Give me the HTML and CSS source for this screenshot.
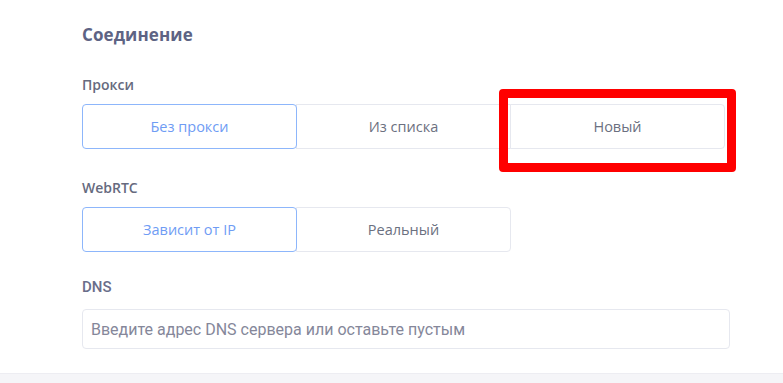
FILE: index.html
```html
<!DOCTYPE html>
<html lang="ru">
<head>
<meta charset="utf-8">
<link rel="stylesheet" href="styles.css">
</head>
<body>
<div class="page">
  <section class="section">
    <h2 class="title">Соединение</h2>
    <div class="field field-proxy">
      <div class="label">Прокси</div>
      <div class="seg seg-3">
        <button class="seg-btn active">Без прокси</button>
        <button class="seg-btn">Из списка</button>
        <button class="seg-btn marked">Новый</button>
      </div>
    </div>
    <div class="field field-webrtc">
      <div class="label">WebRTC</div>
      <div class="seg seg-2">
        <button class="seg-btn active">Зависит от IP</button>
        <button class="seg-btn">Реальный</button>
      </div>
    </div>
    <div class="field field-dns">
      <div class="label label-dns">DNS</div>
      <input class="input" type="text" placeholder="Введите адрес DNS сервера или оставьте пустым">
    </div>
  </section>
  <div class="footer-band"></div>
</div>
</body>
</html>
```

FILE: styles.css
```css
html, body {
  margin: 0;
  padding: 0;
  background: #ffffff;
}
body {
  font-family: "Open Sans", "Noto Sans", sans-serif;
  width: 783px;
  height: 383px;
  overflow: hidden;
}
.page {
  display: flex;
  flex-direction: column;
  height: 383px;
}
.section {
  padding: 24px 0 0 82px;
  box-sizing: border-box;
}
.title {
  margin: 0;
  font-size: 17px;
  line-height: 22px;
  font-weight: 700;
  color: #5d6384;
  letter-spacing: 0.1px;
}
.field-proxy { margin-top: 29px; }
.field-webrtc { margin-top: 29px; }
.field-dns { margin-top: 26px; }
.label {
  font-size: 14px;
  line-height: 19px;
  font-weight: 600;
  color: #666a7e;
  margin-bottom: 10px;
}
.label-dns {
  font-family: "Roboto", "Open Sans", sans-serif;
  font-size: 15px;
  font-weight: 500;
  color: #6a6e8a;
  margin-bottom: 12px;
}
.seg {
  display: flex;
}
.seg-btn {
  width: 215px;
  height: 45px;
  box-sizing: border-box;
  border: 1px solid #e6e8ef;
  background: #ffffff;
  font-family: "Open Sans", "Noto Sans", sans-serif;
  font-size: 14.5px;
  color: #6b7080;
  padding: 0;
  margin: 0 0 0 -1px;
  position: relative;
}
.seg-btn:first-child {
  margin-left: 0;
  border-radius: 4px 0 0 4px;
}
.seg-btn:last-child {
  border-radius: 0 4px 4px 0;
}
.seg-btn.active {
  border: 1.5px solid #8db6fb;
  border-radius: 4px;
  color: #6f9cf4;
  z-index: 1;
}
.marked::after {
  content: "";
  position: absolute;
  left: -12px;
  top: -16px;
  right: -12px;
  bottom: -24px;
  border: 9.5px solid #ff0000;
  border-radius: 4px;
  pointer-events: none;
}
.input {
  display: block;
  width: 648px;
  height: 40px;
  box-sizing: border-box;
  border: 1px solid #e6e8ef;
  border-radius: 4px;
  padding: 0 8px;
  font-family: "Roboto", "Liberation Sans", sans-serif;
  font-size: 16px;
  color: #555;
  outline: none;
}
.input::placeholder {
  color: #85879a;
}
.footer-band {
  margin-top: 24px;
  flex: 1;
  background: #f5f5f8;
  border-top: 1px solid #ededf2;
}
```
